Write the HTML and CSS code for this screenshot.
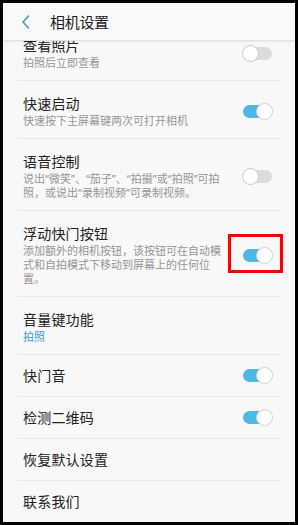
FILE: index.html
```html
<!DOCTYPE html>
<html lang="zh">
<head>
<meta charset="utf-8">
<link rel="stylesheet" href="styles.css">
</head>
<body>
<div class="screen">
  <header class="appbar">
    <svg class="back" width="10" height="16" viewBox="0 0 10 16"><path d="M8 1.5 L2 8 L8 14.5" fill="none" stroke="#3b9fd1" stroke-width="1.6"/></svg>
    <span class="title">相机设置</span>
  </header>
  <div class="viewport">
    <div class="list">
      <div class="row">
        <div class="texts"><div class="main">查看照片</div><div class="sub">拍照后立即查看</div></div>
        <span class="toggle"></span>
      </div>
      <div class="row">
        <div class="texts"><div class="main">快速启动</div><div class="sub">快速按下主屏幕键两次可打开相机</div></div>
        <span class="toggle on"></span>
      </div>
      <div class="row">
        <div class="texts"><div class="main">语音控制</div><div class="sub">说出“微笑”、“茄子”、“拍摄”或“拍照”可拍照，或说出“录制视频”可录制视频。</div></div>
        <span class="toggle"></span>
      </div>
      <div class="row">
        <div class="texts"><div class="main">浮动快门按钮</div><div class="sub">添加额外的相机按钮，该按钮可在自动模式和自拍模式下移动到屏幕上的任何位置。</div></div>
        <span class="toggle on"></span>
        <span class="highlight"></span>
      </div>
      <div class="row">
        <div class="texts"><div class="main">音量键功能</div><div class="sub blue">拍照</div></div>
      </div>
      <div class="row single">
        <div class="texts"><div class="main">快门音</div></div>
        <span class="toggle on"></span>
      </div>
      <div class="row single">
        <div class="texts"><div class="main">检测二维码</div></div>
        <span class="toggle on"></span>
      </div>
      <div class="row single">
        <div class="texts"><div class="main">恢复默认设置</div></div>
      </div>
      <div class="row single last">
        <div class="texts"><div class="main">联系我们</div></div>
      </div>
    </div>
  </div>
</div>
</body>
</html>
```

FILE: styles.css
```css
html, body {
  margin: 0;
  padding: 0;
  background: #000;
}
body {
  width: 298px;
  height: 525px;
  padding: 3px;
  box-sizing: border-box;
  font-family: "Noto Sans CJK SC", "Noto Sans", sans-serif;
}
.screen {
  width: 292px;
  height: 519px;
  background: #f8f8f8;
  display: flex;
  flex-direction: column;
  overflow: hidden;
}
.appbar {
  height: 37px;
  flex: none;
  display: flex;
  align-items: center;
  background: #f9f9f9;
  border-bottom: 1px solid #e2e2e2;
  box-shadow: 0 1px 2px rgba(0,0,0,0.06);
  position: relative;
  z-index: 2;
}
.back {
  margin-left: 18px;
  margin-right: 19px;
}
.title {
  font-size: 15px;
  color: #1f1f1f;
  letter-spacing: -0.3px;
}
.viewport {
  flex: 1;
  overflow: hidden;
}
.list {
  margin-top: -18px;
  padding: 0 15px;
}
.row {
  position: relative;
  display: flex;
  align-items: center;
  padding: 13px 0 10px 5px;
  border-bottom: 1px solid #e8e8e8;
}
.row.single {
  padding: 0 0 0 5px;
  height: 41px;
}
.row.last {
  border-bottom: none;
}
.texts {
  flex: 1;
  min-width: 0;
  padding-right: 15px;
}
.main {
  font-size: 14px;
  line-height: 19px;
  color: #222;
  letter-spacing: 0.2px;
}
.sub {
  font-family: "Noto Sans", "Noto Sans CJK SC", sans-serif;
  font-size: 11px;
  line-height: 14px;
  color: #959595;
  margin-top: 1px;
}
.sub.blue {
  color: #3b9fd1;
}
.toggle {
  flex: none;
  width: 31px;
  height: 17px;
  margin-right: 7px;
  position: relative;
}
.toggle::before {
  content: "";
  position: absolute;
  left: 1px;
  right: 1px;
  top: 2px;
  height: 13px;
  border-radius: 7px;
  background: #dcdcdc;
}
.toggle::after {
  content: "";
  position: absolute;
  left: 0;
  top: 0;
  width: 15px;
  height: 15px;
  border-radius: 50%;
  background: #fff;
  border: 1px solid #c6c6c6;
}
.toggle.on::before {
  background: #4db8e4;
}
.toggle.on::after {
  left: auto;
  right: 0;
  border-color: #d0d0d0;
}
.highlight {
  position: absolute;
  left: 210px;
  top: 23px;
  width: 49px;
  height: 33px;
  border: 3px solid #f00;
}
```
